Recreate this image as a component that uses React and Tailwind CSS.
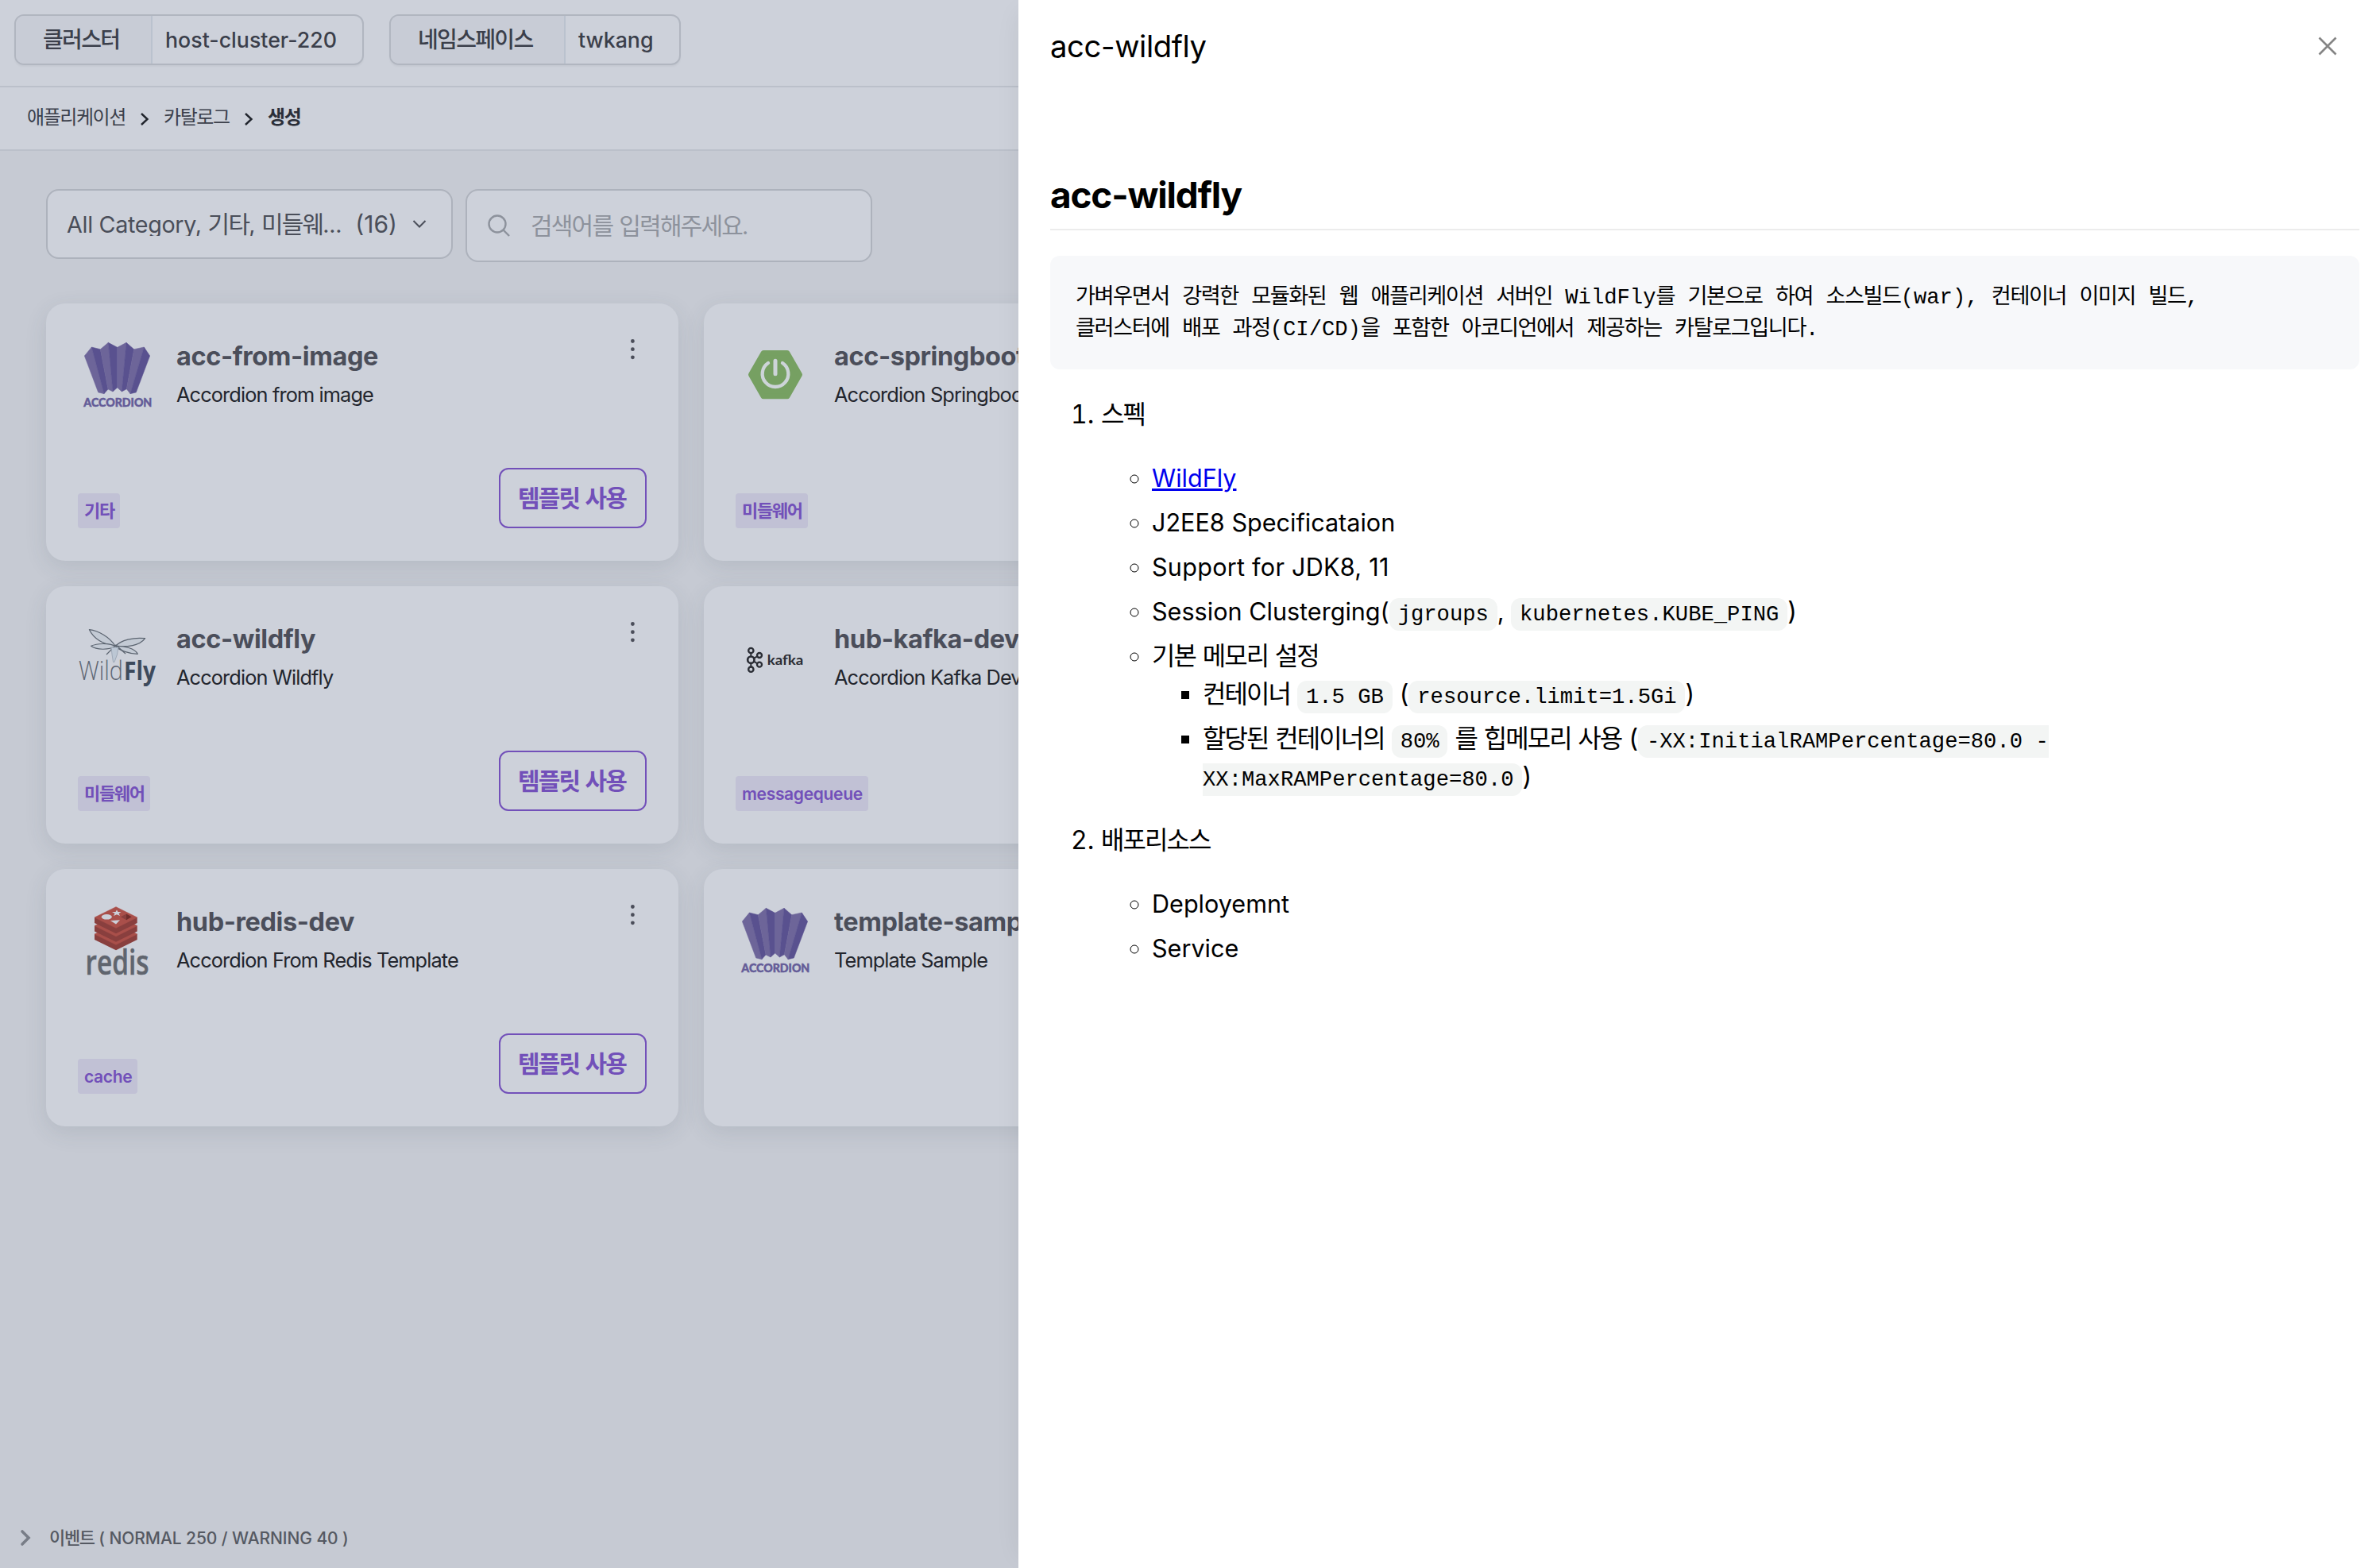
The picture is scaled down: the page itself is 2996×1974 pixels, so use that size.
import React from "react";

const HANGUL = /([\u3131-\uD79D]+)/;

// Balances Latin and Hangul glyph sizes inside one run of interface text.
function Mixed({ className, children }) {
  return (
    <span className={className}>
      {children.split(HANGUL).map((part, i) =>
        i % 2 ? (
          <span key={i} className="leading-none tracking-[-0.06em]">
            {part}
          </span>
        ) : (
          <span key={i} className="text-[0.956em] leading-none">
            {part}
          </span>
        )
      )}
    </span>
  );
}

function MonoMixed({ children }) {
  return children.split(HANGUL).map((part, i) =>
    i % 2 ? (
      <span key={i} className="tracking-[-0.0535em]">
        {part}
      </span>
    ) : (
      part
    )
  );
}

function AccordionLogo() {
  const stripes = [
    ["163,240 190,207 237,383 215,378", "#6d6599"],
    ["190,207 223,215 252,366 237,383", "#59518f"],
    ["223,215 253,190 270,375 252,366", "#6d6599"],
    ["253,190 287,208 287,360 270,375", "#59518f"],
    ["287,208 321,190 304,375 287,360", "#6d6599"],
    ["321,190 350,215 322,365 304,375", "#59518f"],
    ["350,215 388,207 336,383 322,365", "#6d6599"],
    ["388,207 410,240 358,378 336,383", "#59518f"],
  ];
  return (
    <svg viewBox="138 162 300 300" className="size-[100px]">
      {stripes.map(([points, fill]) => (
        <polygon key={points} points={points} fill={fill} stroke={fill} strokeWidth="1.5" strokeLinejoin="round" />
      ))}
      <text x="160" y="432" textLength="258" lengthAdjust="spacingAndGlyphs" fontFamily="Lato, sans-serif" fontWeight="900" fontSize="47" fill="#645c98" stroke="#645c98" strokeWidth="1.5">
        ACCORDION
      </text>
    </svg>
  );
}

function SpringLogo() {
  return (
    <svg viewBox="138 156 300 300" className="size-[100px]">
      <polygon points="196,305 243,223 333,223 380,305 333,387 243,387" fill="#76a062" stroke="#76a062" strokeWidth="20" strokeLinejoin="round" />
      <g fill="none" stroke="#cdd4d8" strokeLinecap="round">
        <path d="M261 261A49 49 0 1 0 315 261" strokeWidth="13" />
        <path d="M288 253V302" strokeWidth="15" />
      </g>
    </svg>
  );
}

function WildflyLogo() {
  return (
    <svg viewBox="98 778 100 100" className="size-[100px]">
      <g fill="#c3cad4" stroke="#5b6470" strokeWidth="1.2" strokeLinejoin="round">
        <path d="M145.3 813.5C136 812 120 808 112.4 792.7C124 794 138 802 145.3 813.5Z" />
        <path d="M145.3 813.5C152 806 168 802 182.6 803.7C176 813 160 815 145.3 813.5Z" />
        <path d="M145.3 813.5C136 809 122 810 114.6 813.3C122 819 138 818 145.3 813.5Z" />
        <path d="M145.3 813.5C156 813 170 816 173.3 823.3C162 823 151 819 145.3 813.5Z" />
        <path d="M134 824L146 812L158 823" fill="none" />
      </g>
      <path d="M140 815H149L147.5 824L144 833.5H142.5L141 824Z" fill="#bcc7d4" stroke="#8f9bab" strokeWidth=".7" />
      <text x="99" y="856" textLength="56" lengthAdjust="spacingAndGlyphs" fontFamily="'Open Sans', sans-serif" fontWeight="300" fontSize="33" fill="#5d6673">
        Wild
      </text>
      <text x="156" y="856" textLength="40" lengthAdjust="spacingAndGlyphs" fontFamily="'Open Sans', sans-serif" fontWeight="700" fontSize="33" fill="#3d4a5c">
        Fly
      </text>
    </svg>
  );
}

function KafkaLogo() {
  return (
    <svg viewBox="138 144 300 300" className="size-[100px]">
      <g fill="none" stroke="#2a2d35" strokeWidth="7">
        <circle cx="196" cy="267" r="9.5" />
        <circle cx="196" cy="302" r="12.5" strokeWidth="8" />
        <circle cx="196" cy="338" r="9.5" />
        <circle cx="228" cy="285" r="9" />
        <circle cx="228" cy="320" r="9" />
        <path d="M196 276V290M196 314V329M207 296L220 289M207 308L220 316" strokeWidth="6" />
      </g>
      <text x="257" y="321" textLength="137" lengthAdjust="spacingAndGlyphs" fontFamily="Lato, sans-serif" fontWeight="700" fontSize="51" fill="#2a2d35">
        kafka
      </text>
    </svg>
  );
}

function RedisLogo() {
  return (
    <svg viewBox="98 1134 100 100" className="size-[100px]">
      {[21, 10.5, 0].map((dy) => (
        <g key={dy} transform={`translate(0 ${dy})`}>
          <path d="M119 1155V1162L146 1175.3L172.7 1162V1155Z" fill="#893f3e" />
          <path d="M146 1141.7L172.7 1155L146 1168.3L119 1155Z" fill="#a94f4a" stroke="#a94f4a" strokeWidth=".6" strokeLinejoin="round" />
        </g>
      ))}
      <ellipse cx="134.3" cy="1154.3" rx="6.5" ry="3.3" fill="#ccd0d9" />
      <path d="M147 1145.5L148.5 1148L152.5 1148L149.5 1150L151 1153L147 1151.3L143 1153L144.5 1150L141 1148H145.5Z" fill="#ccd0d9" />
      <path d="M139 1159L151 1158.3L146 1163.6Z" fill="#ccd0d9" />
      <path d="M152 1154.3L159 1150.5V1158.2Z" fill="#893f3e" />
      <path d="M159 1150.5L165.7 1154.3L159 1158.2Z" fill="#6f2d2c" />
      <text x="107.5" y="1226.7" textLength="80" lengthAdjust="spacingAndGlyphs" fontFamily="'Open Sans', sans-serif" fontWeight="600" fontSize="44" fill="#60656e" stroke="#60656e" strokeWidth=".5">
        redis
      </text>
    </svg>
  );
}

const cards = [
  { name: "acc-from-image", desc: "Accordion from image", tag: "기타", Logo: AccordionLogo },
  { name: "acc-springboot", desc: "Accordion Springboot", tag: "미들웨어", Logo: SpringLogo },
  { name: "acc-wildfly", desc: "Accordion Wildfly", tag: "미들웨어", Logo: WildflyLogo },
  { name: "hub-kafka-dev", desc: "Accordion Kafka Dev", tag: "messagequeue", Logo: KafkaLogo },
  { name: "hub-redis-dev", desc: "Accordion From Redis Template", tag: "cache", Logo: RedisLogo },
  { name: "template-sample", desc: "Template Sample", Logo: AccordionLogo },
];

function Card({ name, desc, tag, Logo }) {
  return (
    <article className="flex h-[324px] w-[796px] shrink-0 flex-col justify-between rounded-[24px] bg-[#cdd1da] px-10 pt-10 pb-[41px] shadow-[0_8px_28px_rgba(60,70,90,0.12)]">
      <div className="flex items-start">
        <Logo />
        <div className="ml-6 flex grow flex-col pt-[6px]">
          <h2 className="text-[34px] leading-[40px] font-bold tracking-[-0.012em] text-[#4b4e5a]">
            <Mixed>{name}</Mixed>
          </h2>
          <p className="mt-3 text-[26.5px] leading-[32px] tracking-[-0.033em] text-[#22252d]">
            <Mixed>{desc}</Mixed>
          </p>
        </div>
        <svg viewBox="0 0 36 36" className="size-9" fill="#4b4e5a">
          <circle cx="18.4" cy="7.5" r="2.4" />
          <circle cx="18.4" cy="17.7" r="2.4" />
          <circle cx="18.4" cy="27.8" r="2.4" />
        </svg>
      </div>
      {tag && (
        <div className="flex items-end justify-between">
          <span className="h-11 rounded bg-[#c1c1d5] pr-[7px] pl-2 text-[22px] leading-[44px] font-semibold tracking-[-0.015em] text-[#7250b9]">
            <Mixed>{tag}</Mixed>
          </span>
          <button className="h-[76px] w-[186px] rounded-[12px] border-2 border-[#7250b9] pr-[2px] text-[30px] leading-[72px] font-semibold text-[#7250b9]">
            <Mixed>템플릿 사용</Mixed>
          </button>
        </div>
      )}
    </article>
  );
}

function Separator() {
  return (
    <svg viewBox="0 0 12 18" className="mt-[3px] h-[18px] w-3" fill="none" stroke="#20242c" strokeWidth="2.4">
      <path d="M2 2L9.5 9L2 16" />
    </svg>
  );
}

const Code = ({ children }) => (
  <code className="rounded-[12px] bg-[#f3f5f4] px-[10.88px] py-[5.44px] font-['Liberation_Mono',monospace] text-[27.2px] leading-none">
    {children}
  </code>
);

export default function App() {
  return (
    <div className="flex h-[1974px] w-[2996px] overflow-hidden bg-[#c6cad3] font-[Inter,'Noto_Sans_CJK_KR',sans-serif]">
      <main className="flex w-[1282px] shrink-0 flex-col overflow-hidden">
        <header className="flex h-[110px] shrink-0 items-start gap-8 border-b-2 border-[#bbc0ca] bg-[#cdd1da] pt-[18px] pl-[18px] text-[28px] leading-[60px] font-medium text-[#3b3f4b]">
          <div className="flex h-16 w-[440px] overflow-hidden rounded-[12px] border-2 border-[#b1b6c0] shadow-[0_2px_2px_rgba(0,0,0,0.04)]">
            <div className="w-[172px] shrink-0 border-r-2 border-[#bac2ce] bg-[#c8ccd6] pl-[34px]">
              <Mixed>클러스터</Mixed>
            </div>
            <div className="pl-4">
              <Mixed>host-cluster-220</Mixed>
            </div>
          </div>
          <div className="flex h-16 w-[367px] overflow-hidden rounded-[12px] border-2 border-[#b1b6c0] shadow-[0_2px_2px_rgba(0,0,0,0.04)]">
            <div className="w-[220px] shrink-0 border-r-2 border-[#bac2ce] bg-[#c8ccd6] pl-[34px]">
              <Mixed>네임스페이스</Mixed>
            </div>
            <div className="pl-4">
              <Mixed>twkang</Mixed>
            </div>
          </div>
        </header>
        <nav className="flex h-20 shrink-0 items-center border-b-2 border-[#bbc0ca] bg-[#cdd1da] pb-[2px] pl-[34px] text-[24px] leading-[32px] text-[#3b3f4b]">
          <Mixed className="w-[142px]">애플리케이션</Mixed>
          <Separator />
          <Mixed className="ml-[18px] w-[101px]">카탈로그</Mixed>
          <Separator />
          <Mixed className="ml-[18px] font-bold text-[#2b2f39]">생성</Mixed>
        </nav>
        <section className="flex w-[1740px] grow flex-col pt-12 pl-[58px]">
          <div className="flex items-start gap-4 text-[30px]">
            <div className="flex h-[88px] w-[512px] items-center rounded-[16px] border-2 border-[#adb2bc] bg-[#cdd1da] pl-6 text-[#4a4e59]">
              <span className="flex h-[30px] w-[435px] items-center justify-between overflow-hidden whitespace-pre leading-[30px]">
                <Mixed className="tracking-[-0.01em]">All Category, 기타, 미들웨...</Mixed>
                <span className="mr-[19px]">(16)</span>
              </span>
              <svg viewBox="0 0 18 12" className="h-3 w-[18px]" fill="none" stroke="#4a4e59" strokeWidth="2">
                <path d="M1.5 2L9 9.5L16.5 2" />
              </svg>
            </div>
            <div className="flex h-[92px] w-[512px] items-center rounded-[16px] border-2 border-[#adb2bc] bg-[#cdd1da] pl-[26px] text-[#8d929c]">
              <svg viewBox="0 0 28 28" className="size-7" fill="none" stroke="#8d929c" strokeWidth="2.4">
                <circle cx="12" cy="12" r="10.5" />
                <path d="M19.5 19.5L27 27" />
              </svg>
              <Mixed className="ml-[26px]">검색어를 입력해주세요.</Mixed>
            </div>
          </div>
          <div className="mt-[52px] grid grid-cols-[796px_796px] gap-8">
            {cards.map((c) => (
              <Card key={c.name} {...c} />
            ))}
          </div>
        </section>
        <footer className="flex h-[76px] shrink-0 items-center pl-6 text-[22px] font-medium tracking-[-0.004em] text-[#555962]">
          <svg viewBox="0 0 16 24" className="h-6 w-4" fill="none" stroke="#787d87" strokeWidth="3.6" strokeLinecap="round">
            <path d="M4 4L12 12L4 20" />
          </svg>
          <Mixed className="ml-[22px]">이벤트 ( NORMAL 250 / WARNING 40 )</Mixed>
        </footer>
      </main>

      <aside className="z-10 flex grow flex-col bg-white pr-[26px] pl-10 text-black shadow-[-12px_0_32px_-16px_rgba(0,0,0,0.08)]">
        <div className="flex h-[116px] shrink-0 items-center justify-between pr-7 text-[40px] leading-[48px] tracking-[-0.01em]">
          <Mixed>acc-wildfly</Mixed>
          <svg viewBox="0 0 24 24" className="size-6" fill="none" stroke="#858585" strokeWidth="2.6">
            <path d="M1.5 1.5L22.5 22.5M22.5 1.5L1.5 22.5" />
          </svg>
        </div>
        <h1 className="mt-[99px] h-[75px] shrink-0 border-b-2 border-[#ececec] text-[48px] leading-[60px] font-bold tracking-[-0.024em]">
          <Mixed>acc-wildfly</Mixed>
        </h1>
        <pre className="mt-8 h-[143px] shrink-0 rounded-[12px] bg-[#f7f8fa] px-8 pt-[33px] font-['Liberation_Mono','Noto_Sans_CJK_KR',monospace] text-[27.2px] leading-[40px]">
          <MonoMixed>
            {"가벼우면서 강력한 모듈화된 웹 애플리케이션 서버인 WildFly를 기본으로 하여 소스빌드(war), 컨테이너 이미지 빌드,\n클러스터에 배포 과정(CI/CD)을 포함한 아코디언에서 제공하는 카탈로그입니다."}
          </MonoMixed>
        </pre>
        <ol className="mt-[33px] list-decimal pl-16 text-[32px] leading-[48px]">
          <li>
            <Mixed>스펙</Mixed>
            <ul className="mt-8 list-[circle] space-y-2 pl-16">
              <li>
                <a className="text-[#0000ee] underline">
                  <Mixed>WildFly</Mixed>
                </a>
              </li>
              <li>
                <Mixed>J2EE8 Specificataion</Mixed>
              </li>
              <li className="tracking-[0.008em]">
                <Mixed>Support for JDK8, 11</Mixed>
              </li>
              <li>
                <Mixed>Session Clusterging(</Mixed>
                <Code>jgroups</Code>
                <Mixed>, </Mixed>
                <Code>kubernetes.KUBE_PING</Code>)
              </li>
              <li>
                <Mixed>기본 메모리 설정</Mixed>
                <ul className="list-[square] space-y-2 pl-16">
                  <li>
                    <Mixed>컨테이너</Mixed> <Code>1.5 GB</Code> (<Code>resource.limit=1.5Gi</Code>)
                  </li>
                  <li>
                    <Mixed>할당된 컨테이너의</Mixed> <Code>80%</Code> <Mixed>를 힙메모리 사용</Mixed> (
                    <Code>
                      -XX:InitialRAMPercentage=80.0 -<br />
                      XX:MaxRAMPercentage=80.0
                    </Code>
                    )
                  </li>
                </ul>
              </li>
            </ul>
          </li>
          <li className="mt-8">
            <Mixed>배포리소스</Mixed>
            <ul className="mt-8 list-[circle] space-y-2 pl-16">
              <li>
                <Mixed>Deployemnt</Mixed>
              </li>
              <li>
                <Mixed>Service</Mixed>
              </li>
            </ul>
          </li>
        </ol>
      </aside>
    </div>
  );
}
